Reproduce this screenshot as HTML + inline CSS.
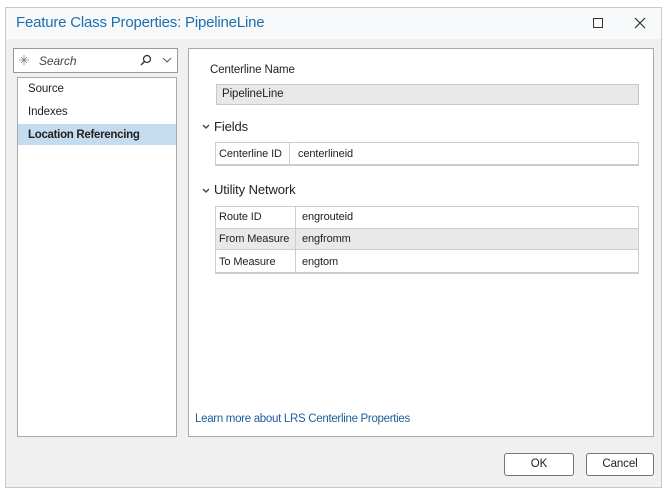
<!DOCTYPE html>
<html><head><style>
*{box-sizing:border-box;margin:0;padding:0}
body{width:667px;height:493px;background:#fff;font-family:"Liberation Sans",sans-serif;font-size:11.5px;color:#222;position:relative;overflow:hidden;letter-spacing:-0.1px}
.win{position:absolute;left:5px;top:7px;width:657px;height:481px;border:1px solid #c8c8c8;background:#f0f0f0}
.title{position:absolute;left:0;top:0;width:655px;height:31px;background:#f7f9fa}
.title span{position:absolute;left:10px;top:6px;font-size:15px;color:#1d6fae;letter-spacing:-0.2px}
.abs{position:absolute}
.box{position:absolute;background:#fff;border:1px solid #a9a9a9}
.cell{position:absolute;font-size:11px}
</style></head><body>
<div class="win">
 <div class="title"><span>Feature Class Properties: PipelineLine</span>
  <div class="abs" style="left:587px;top:10px;width:10px;height:10px;border:1px solid #333"></div>
  <svg class="abs" style="left:628px;top:9px" width="12" height="12"><path d="M1 1L11 11M11 1L1 11" stroke="#333" stroke-width="1.2"/></svg>
 </div>
 <div class="box" style="left:7px;top:40px;width:165px;height:25px;border-color:#999"></div>
 <svg class="abs" style="left:12px;top:46px" width="12" height="12"><path d="M6 1V11M1 6H11M3 3L9 9M9 3L3 9" stroke="#888" stroke-width="0.8"/></svg>
 <div class="abs" style="left:33px;top:46px;font-style:italic;color:#444;font-size:12px">Search</div>
 <svg class="abs" style="left:133px;top:45px" width="14" height="14"><circle cx="8" cy="6" r="3.5" fill="none" stroke="#333" stroke-width="1.3"/><path d="M5.5 8.5L2 12" stroke="#333" stroke-width="1.4"/></svg>
 <svg class="abs" style="left:156px;top:49px" width="10" height="7"><path d="M1 1L5 5L9 1" fill="none" stroke="#555"/></svg>
 <div class="box" style="left:11px;top:69px;width:160px;height:360px"></div>
 <div class="abs" style="left:12px;top:116px;width:158px;height:21px;background:#c5dcee"></div>
 <div class="abs" style="left:22px;top:75px">Source</div>
 <div class="abs" style="left:22px;top:98px">Indexes</div>
 <div class="abs" style="left:22px;top:121px;font-weight:bold;letter-spacing:-0.3px">Location Referencing</div>
 <div class="box" style="left:182px;top:40px;width:466px;height:389px"></div>
 <div class="abs" style="left:204px;top:56px">Centerline Name</div>
 <div class="abs" style="left:210px;top:76px;width:423px;height:21px;background:#e8e8e8;border:1px solid #c8c8c8;padding:3px 5px">PipelineLine</div>
 <svg class="abs" style="left:196px;top:116px" width="8" height="6"><path d="M1 1L4 4L7 1" fill="none" stroke="#444" stroke-width="1.4"/></svg>
 <div class="abs" style="left:208px;top:111px;font-size:13px">Fields</div>
 <div class="abs" style="left:209px;top:134px;width:424px;height:24px;border:1px solid #ccc;border-bottom:2px solid #ccc;background:#fff"></div>
 <div class="abs" style="left:283px;top:135px;width:1px;height:21px;background:#ccc"></div>
 <div class="cell" style="left:213px;top:140px">Centerline ID</div>
 <div class="cell" style="left:292px;top:140px">centerlineid</div>
 <svg class="abs" style="left:196px;top:180px" width="8" height="6"><path d="M1 1L4 4L7 1" fill="none" stroke="#444" stroke-width="1.4"/></svg>
 <div class="abs" style="left:208px;top:174px;font-size:13px">Utility Network</div>
 <div class="abs" style="left:209px;top:198px;width:424px;height:68px;border:1px solid #ccc;border-bottom:2px solid #ccc;background:#fff"></div>
 <div class="abs" style="left:210px;top:220px;width:422px;height:22px;background:#e9e9e9;border-top:1px solid #ccc;border-bottom:1px solid #ccc"></div>
 <div class="abs" style="left:289px;top:199px;width:1px;height:65px;background:#ccc"></div>
 <div class="cell" style="left:213px;top:203px">Route ID</div><div class="cell" style="left:296px;top:203px">engrouteid</div>
 <div class="cell" style="left:213px;top:225px">From Measure</div><div class="cell" style="left:296px;top:225px">engfromm</div>
 <div class="cell" style="left:213px;top:248px">To Measure</div><div class="cell" style="left:296px;top:248px">engtom</div>
 <div class="abs" style="left:189px;top:405px;color:#1d5e9c;letter-spacing:-0.3px">Learn more about LRS Centerline Properties</div>
 <div class="abs" style="left:498px;top:445px;width:70px;height:23px;border:1px solid #777;border-radius:3px;background:#fff;text-align:center;line-height:21px">OK</div>
 <div class="abs" style="left:580px;top:445px;width:68px;height:23px;border:1px solid #777;border-radius:3px;background:#fff;text-align:center;line-height:21px">Cancel</div>
</div>
</body></html>
